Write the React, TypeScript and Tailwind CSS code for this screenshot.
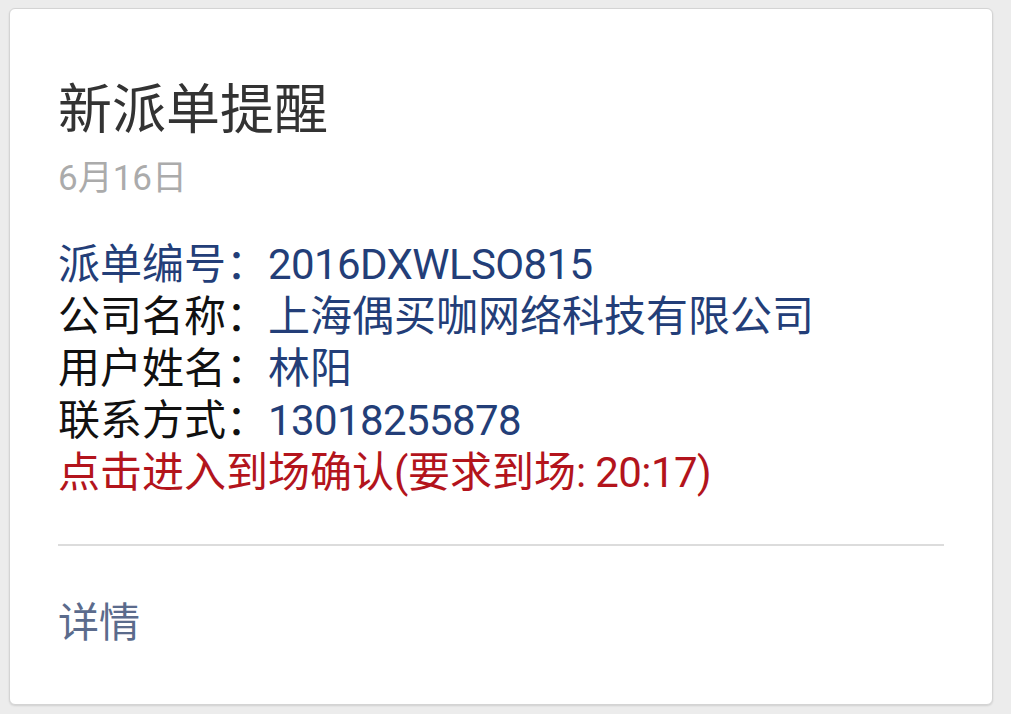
export default function App() {
  const rows = [
    { label: '派单编号：', value: '2016DXWLSO815', labelBlue: true, latin: true },
    { label: '公司名称：', value: '上海偶买咖网络科技有限公司' },
    { label: '用户姓名：', value: '林阳' },
    { label: '联系方式：', value: '13018255878', latin: true },
  ];

  return (
    <div
      className="min-h-[714px] bg-[#ececec] pl-[9px] pr-[18px] pt-[8px]"
      style={{ fontFamily: "Roboto, 'Noto Sans CJK SC', sans-serif" }}
    >
      <div className="h-[697px] rounded-[6px] border border-[#d4d4d4] bg-white px-[48px] pt-[69px] shadow-[0_1px_2px_rgba(0,0,0,0.12)]">
        <h1 className="text-[54px] leading-[65px] font-normal text-[#333333]">新派单提醒</h1>
        <div className="mt-4 text-[35px] leading-[40px] text-[#ababab]">6月16日</div>

        <div className="mt-[40px] text-[42px] leading-[52px]">
          {rows.map((r) => (
            <div key={r.label} className="whitespace-nowrap">
              <span className={r.labelBlue ? 'text-[#233e78]' : 'text-[#111111]'}>{r.label}</span>
              <span className={r.latin ? 'tracking-[-0.6px] text-[#233e78]' : 'text-[#233e78]'}>{r.value}</span>
            </div>
          ))}
          <div className="whitespace-nowrap text-[#b3141c]">
            点击进入到场确认<span className="tracking-[-0.5px]">(</span>要求到场<span className="tracking-[-0.6px]">: 20:17)</span>
          </div>
        </div>

        <div className="mt-[45px] border-t-2 border-[#dcdcdc]" />

        <div className="mt-[53px] text-[41px] leading-[48px] text-[#5b6b8c]">详情</div>
      </div>
    </div>
  );
}
